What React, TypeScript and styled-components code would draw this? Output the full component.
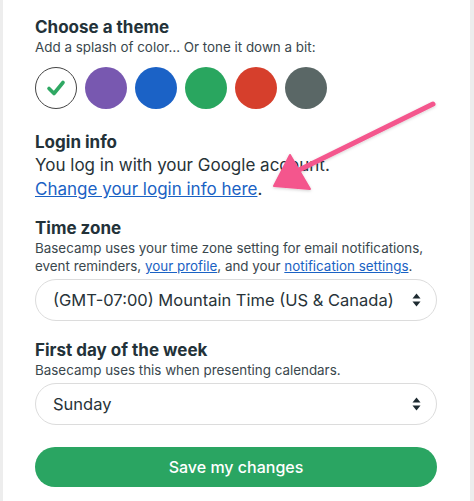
import styled, { createGlobalStyle } from "styled-components";

const GlobalStyle = createGlobalStyle`
  html, body {
    margin: 0;
    padding: 0;
    background: #ededed;
  }
  body {
    font-family: Inter, "Liberation Sans", sans-serif;
    color: #283c46;
  }
`;

const themes = [
  { name: "white", color: "#ffffff" },
  { name: "purple", color: "#7858b0" },
  { name: "blue", color: "#1b62c6" },
  { name: "green", color: "#29a65f" },
  { name: "red", color: "#d63f2c" },
  { name: "gray", color: "#5a6766" },
];

const Check = () => (
  <svg width="20" height="18" viewBox="0 0 20 18">
    <path
      d="M3 9.5 L8 14.5 L17 3.5"
      fill="none"
      stroke="#2fa863"
      strokeWidth="3.6"
      strokeLinecap="round"
      strokeLinejoin="round"
    />
  </svg>
);

const SelectArrows = () => (
  <svg width="9" height="14" viewBox="0 0 9 14">
    <path d="M4.5 0.5 L8.5 5.5 L0.5 5.5 Z" fill="#1d2a30" />
    <path d="M4.5 13.5 L8.5 8.5 L0.5 8.5 Z" fill="#1d2a30" />
  </svg>
);

const PointerArrow = () => (
  <ArrowLayer width="474" height="501" viewBox="0 0 474 501">
    <defs>
      <filter id="arrowShadow" x="-20%" y="-20%" width="140%" height="140%">
        <feDropShadow dx="0" dy="1" stdDeviation="1.5" floodColor="#000" floodOpacity="0.18" />
      </filter>
    </defs>
    <g filter="url(#arrowShadow)" fill="#f4568d" stroke="#f4568d">
      <line x1="433" y1="104" x2="297" y2="171" strokeWidth="5" strokeLinecap="round" />
      <path d="M274 186 L290 155 L310 189 Z" strokeWidth="2" strokeLinejoin="round" />
    </g>
  </ArrowLayer>
);

export default function App() {
  return (
    <Frame>
      <GlobalStyle />
      <Panel>
        <Section $top={0}>
          <Heading>Choose a theme</Heading>
          <Hint>Add a splash of color… Or tone it down a bit:</Hint>
          <Swatches>
            {themes.map((t, i) => (
              <Swatch key={t.name} $color={t.color} $selected={i === 0}>
                {i === 0 && <Check />}
              </Swatch>
            ))}
          </Swatches>
        </Section>

        <Section $top={22}>
          <Heading>Login info</Heading>
          <Body>
            You log in with your Google account.
            <br />
            <Link href="#">Change your login info here</Link>.
          </Body>
        </Section>

        <Section $top={16}>
          <Heading>Time zone</Heading>
          <Hint>
            Basecamp uses your time zone setting for email notifications,
            event reminders, <Link href="#">your profile</Link>, and your{" "}
            <Link href="#">notification settings</Link>.
          </Hint>
          <SelectBox>
            <span>(GMT-07:00) Mountain Time (US &amp; Canada)</span>
            <SelectArrows />
          </SelectBox>
        </Section>

        <Section $top={18}>
          <Heading>First day of the week</Heading>
          <Hint>Basecamp uses this when presenting calendars.</Hint>
          <SelectBox>
            <span>Sunday</span>
            <SelectArrows />
          </SelectBox>
        </Section>

        <SaveButton>Save my changes</SaveButton>
      </Panel>
      <PointerArrow />
    </Frame>
  );
}

const Frame = styled.div`
  position: relative;
  width: 474px;
  height: 501px;
  padding: 0 4px 0 3px;
  box-sizing: border-box;
  background: #ededed;
  overflow: hidden;
`;

const Panel = styled.div`
  height: 100%;
  background: #fff;
  padding: 16px 33px 0 32px;
  box-sizing: border-box;
  display: flex;
  flex-direction: column;
`;

const Section = styled.div<{ $top: number }>`
  display: flex;
  flex-direction: column;
  margin-top: ${(p) => p.$top}px;
`;

const Heading = styled.h2`
  margin: 0;
  font-size: 17px;
  line-height: 22px;
  font-weight: 700;
  color: #233239;
`;

const Hint = styled.p`
  margin: 0;
  font-size: 13.4px;
  line-height: 18px;
  color: #3a474d;
`;

const Body = styled.p`
  margin: 0;
  font-size: 17px;
  line-height: 24px;
  color: #283338;
`;

const Link = styled.a`
  color: #1a62c4;
  text-decoration: underline;
  text-underline-offset: 1px;
`;

const Swatches = styled.div`
  display: flex;
  gap: 8px;
  margin-top: 11px;
`;

const Swatch = styled.div<{ $color: string; $selected: boolean }>`
  width: 42px;
  height: 42px;
  border-radius: 50%;
  box-sizing: border-box;
  background: ${(p) => p.$color};
  border: ${(p) => (p.$selected ? "1.5px solid #444" : "none")};
  display: flex;
  align-items: center;
  justify-content: center;
`;

const SelectBox = styled.div`
  margin-top: 4px;
  height: 42px;
  box-sizing: border-box;
  border: 1px solid #dcdcdc;
  border-radius: 21px;
  padding: 0 15px 0 17px;
  display: flex;
  align-items: center;
  justify-content: space-between;
  font-size: 16.5px;
  color: #283338;
`;

const SaveButton = styled.button`
  height: 40px;
  border: none;
  border-radius: 20px;
  background: #2aa562;
  color: #fff;
  font-family: inherit;
  font-size: 16px;
  font-weight: 500;
  margin-top: 22px;
`;

const ArrowLayer = styled.svg`
  position: absolute;
  top: 0;
  left: 0;
  pointer-events: none;
`;
